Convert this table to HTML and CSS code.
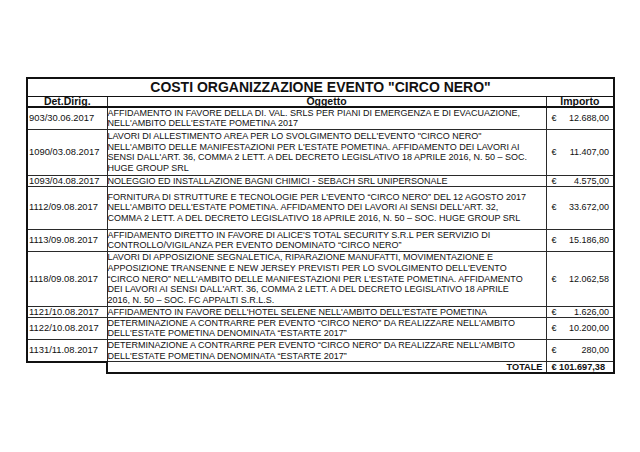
FILE: index.html
```html
<!DOCTYPE html>
<html>
<head>
<meta charset="utf-8">
<link rel="stylesheet" href="styles.css">
</head>
<body>
<div class="page">
<table class="costi">
  <colgroup>
    <col class="c-det">
    <col class="c-ogg">
    <col class="c-imp">
  </colgroup>
  <tr class="title-row"><th colspan="3">COSTI ORGANIZZAZIONE EVENTO "CIRCO NERO"</th></tr>
  <tr class="head-row"><th>Det.Dirig.</th><th>Oggetto</th><th>Importo</th></tr>
  <tr class="h2"><td class="det">903/30.06.2017</td><td class="ogg">AFFIDAMENTO IN FAVORE DELLA DI. VAL. SRLS PER PIANI DI EMERGENZA E DI EVACUAZIONE,<br>NELL'AMBITO DELL'ESTATE POMETINA 2017</td><td class="imp"><span class="eur">€</span><span class="amt">12.688,00</span></td></tr>
  <tr class="h4"><td class="det">1090/03.08.2017</td><td class="ogg">LAVORI DI ALLESTIMENTO AREA PER LO SVOLGIMENTO DELL'EVENTO "CIRCO NERO"<br>NELL'AMBITO DELLE MANIFESTAZIONI PER L'ESTATE POMETINA. AFFIDAMENTO DEI LAVORI AI<br>SENSI DALL'ART. 36, COMMA 2 LETT. A DEL DECRETO LEGISLATIVO 18 APRILE 2016, N. 50 – SOC.<br>HUGE GROUP SRL</td><td class="imp"><span class="eur">€</span><span class="amt">11.407,00</span></td></tr>
  <tr class="h1"><td class="det">1093/04.08.2017</td><td class="ogg">NOLEGGIO ED INSTALLAZIONE BAGNI CHIMICI - SEBACH SRL UNIPERSONALE</td><td class="imp"><span class="eur">€</span><span class="amt">4.575,00</span></td></tr>
  <tr class="h3t"><td class="det">1112/09.08.2017</td><td class="ogg">FORNITURA DI STRUTTURE E TECNOLOGIE PER L'EVENTO “CIRCO NERO” DEL 12 AGOSTO 2017<br>NELL'AMBITO DELL'ESTATE POMETINA. AFFIDAMENTO DEI LAVORI AI SENSI DELL'ART. 32,<br>COMMA 2 LETT. A DEL DECRETO LEGISLATIVO 18 APRILE 2016, N. 50 – SOC. HUGE GROUP SRL</td><td class="imp"><span class="eur">€</span><span class="amt">33.672,00</span></td></tr>
  <tr class="h2"><td class="det">1113/09.08.2017</td><td class="ogg">AFFIDAMENTO DIRETTO IN FAVORE DI ALICE'S TOTAL SECURITY S.R.L PER SERVIZIO DI<br>CONTROLLO/VIGILANZA PER EVENTO DENOMINATO “CIRCO NERO”</td><td class="imp"><span class="eur">€</span><span class="amt">15.186,80</span></td></tr>
  <tr class="h5"><td class="det">1118/09.08.2017</td><td class="ogg">LAVORI DI APPOSIZIONE SEGNALETICA, RIPARAZIONE MANUFATTI, MOVIMENTAZIONE E<br>APPOSIZIONE TRANSENNE E NEW JERSEY PREVISTI PER LO SVOLGIMENTO DELL'EVENTO<br>“CIRCO NERO” NELL'AMBITO DELLE MANIFESTAZIONI PER L'ESTATE POMETINA. AFFIDAMENTO<br>DEI LAVORI AI SENSI DALL'ART. 36, COMMA 2 LETT. A DEL DECRETO LEGISLATIVO 18 APRILE<br>2016, N. 50 – SOC. FC APPALTI S.R.L.S.</td><td class="imp"><span class="eur">€</span><span class="amt">12.062,58</span></td></tr>
  <tr class="h1"><td class="det">1121/10.08.2017</td><td class="ogg">AFFIDAMENTO IN FAVORE DELL'HOTEL SELENE NELL'AMBITO DELL'ESTATE POMETINA</td><td class="imp"><span class="eur">€</span><span class="amt">1.626,00</span></td></tr>
  <tr class="h2"><td class="det">1122/10.08.2017</td><td class="ogg">DETERMINAZIONE A CONTRARRE PER EVENTO “CIRCO NERO” DA REALIZZARE NELL'AMBITO<br>DELL'ESTATE POMETINA DENOMINATA “ESTARTE 2017”</td><td class="imp"><span class="eur">€</span><span class="amt">10.200,00</span></td></tr>
  <tr class="h2"><td class="det">1131/11.08.2017</td><td class="ogg">DETERMINAZIONE A CONTRARRE PER EVENTO “CIRCO NERO” DA REALIZZARE NELL'AMBITO<br>DELL'ESTATE POMETINA DENOMINATA “ESTARTE 2017”</td><td class="imp"><span class="eur">€</span><span class="amt">280,00</span></td></tr>
  <tr class="total-row"><td class="blank"></td><td class="tot-label">TOTALE</td><td class="imp tot-imp"><span class="eur">€</span><span class="amt">101.697,38</span></td></tr>
</table>
</div>
</body>
</html>
```

FILE: styles.css
```css
html, body {
  margin: 0;
  padding: 0;
  background: #ffffff;
}

.page {
  padding: 77px 0 0 26px;
}

.costi {
  border-collapse: collapse;
  table-layout: fixed;
  width: 587px;
  font-family: "Liberation Sans", Arial, sans-serif;
  color: #111;
}

.c-det { width: 80px; }
.c-ogg { width: 439px; }
.c-imp { width: 68px; }

.costi th,
.costi td {
  border: 1px solid #2a2a2a;
  padding: 0;
}

.title-row { height: 18px; }
.title-row th {
  font-size: 14px;
  line-height: 15px;
  font-weight: bold;
  text-align: center;
  border: 2px solid #111;
  border-bottom-width: 1px;
}

.head-row { height: 10px; }
.head-row th {
  font-size: 10.5px;
  line-height: 9px;
  font-weight: bold;
  text-align: center;
  border-bottom: 2px solid #111;
}

.head-row th:first-child,
.costi td.det { border-left: 2px solid #111; }
.head-row th:last-child,
.costi td.imp { border-right: 2px solid #111; }

.costi td {
  font-size: 9px;
  line-height: 10.6px;
  vertical-align: middle;
  white-space: nowrap;
}

.costi td.det {
  font-size: 9.4px;
  padding-left: 1px;
}
.ogg { padding-left: 1px; }

.h1 { height: 10px; }
.costi .h1 td { line-height: 10px; }
.h2 { height: 22px; }
.h3t { height: 43px; }
.h4 { height: 46px; }
.h5 { height: 55px; }

.imp { overflow: hidden; }
.imp .eur {
  float: left;
  padding-left: 5px;
}
.imp .amt {
  float: right;
  padding-right: 4px;
}

.total-row { height: 11px; }
.costi .total-row td { line-height: 10px; }
.costi td.blank {
  border: none;
  border-right: 2px solid #111;
  border-top: 2px solid #111;
}
.costi td.tot-label {
  text-align: right;
  font-weight: bold;
  font-size: 9.2px;
  padding-right: 3px;
  border-bottom: 2px solid #111;
}
.costi td.tot-imp {
  font-weight: bold;
  font-size: 9.2px;
  border-bottom: 2px solid #111;
}
.tot-imp .amt { padding-right: 8px; }
```
